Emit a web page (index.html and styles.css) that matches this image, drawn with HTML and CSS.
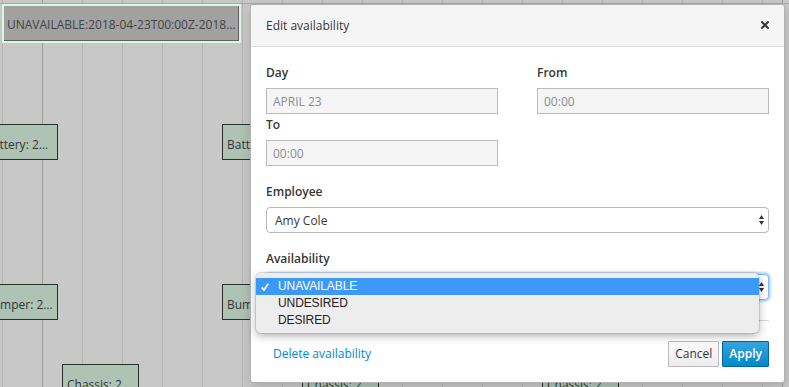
FILE: index.html
```html
<!DOCTYPE html>
<html lang="en">
<head>
  <meta charset="UTF-8" />
  <meta name="viewport" content="width=device-width, initial-scale=1.0"/>
  <title>Edit availability</title>
  <link rel="stylesheet" href="styles.css">
</head>
<body>

  <div class="timeline">
    <div class="timeline-axis"></div>
    <div class="major-line line-a"></div>
    <div class="major-line line-b"></div>

    <div class="item item-selected">UNAVAILABLE:2018-04-23T00:00Z-2018…</div>
    <div class="item battery-1">Battery: 2…</div>
    <div class="item battery-2">Battery: 2…</div>
    <div class="item bumper-1">Bumper: 2…</div>
    <div class="item bumper-2">Bumper: 2…</div>
    <div class="item chassis-1">Chassis: 2…</div>
    <div class="item chassis-2">Chassis: 2…</div>
    <div class="item chassis-3">Chassis: 2…</div>
  </div>

  <div class="modal">
    <div class="modal-header">
      <span class="modal-title">Edit availability</span>
      <svg class="close" width="8" height="8" viewBox="0 0 8 8">
        <path d="M1 1L7 7M7 1L1 7" stroke="#363636" stroke-width="2" stroke-linecap="square"/>
      </svg>
    </div>

    <div class="modal-body">
      <div class="row">
        <div class="form-group">
          <label>Day</label>
          <input class="form-control readonly" value="APRIL 23" readonly>
        </div>
        <div class="form-group">
          <label>From</label>
          <input class="form-control readonly" value="00:00" readonly>
        </div>
      </div>

      <div class="row group-to">
        <div class="form-group">
          <label>To</label>
          <input class="form-control readonly" value="00:00" readonly>
        </div>
      </div>

      <div class="form-group group-gap">
        <label>Employee</label>
        <div class="select-wrap">
          <select class="form-control select">
            <option>Amy Cole</option>
          </select>
          <svg class="select-arrows" width="5" height="10" viewBox="0 0 5 10">
            <path d="M0 4L2.5 0L5 4Z M0 6L5 6L2.5 10Z" fill="#333"/>
          </svg>
        </div>
      </div>

      <div class="form-group group-gap">
        <label>Availability</label>
        <div class="select-wrap">
          <select class="form-control select select-focus">
            <option>UNAVAILABLE</option>
          </select>
          <svg class="select-arrows" width="5" height="10" viewBox="0 0 5 10">
            <path d="M0 4L2.5 0L5 4Z M0 6L5 6L2.5 10Z" fill="#333"/>
          </svg>

          <div class="select-menu">
            <div class="option option-active">
              <svg class="check" width="8" height="8" viewBox="0 0 8 8">
                <path d="M0.8 4.4L3 7L7.3 0.7" fill="none" stroke="#fff" stroke-width="1.8"/>
              </svg>
              UNAVAILABLE
            </div>
            <div class="option">UNDESIRED</div>
            <div class="option">DESIRED</div>
          </div>
        </div>
      </div>
    </div>

    <div class="modal-footer">
      <button class="btn btn-link">Delete availability</button>
      <div class="footer-actions">
        <button class="btn btn-default">Cancel</button>
        <button class="btn btn-primary">Apply</button>
      </div>
    </div>
  </div>

</body>
</html>
```

FILE: styles.css
```css
* {
  box-sizing: border-box;
}

body {
  margin: 0;
  width: 789px;
  height: 387px;
  overflow: hidden;
  position: relative;
  font-family: 'Open Sans', sans-serif;
  font-size: 12px;
  color: #363636;
}

/* timeline behind the dialog */
.timeline {
  position: relative;
  height: 387px;
  overflow: hidden;
  background-color: #c8c8c8;
  background-image: linear-gradient(to right, #b4b4b4 1px, transparent 1px);
  background-size: 40px 100%;
  background-position: 2px 0;
}

.timeline-axis {
  height: 4px;
  border-bottom: 1px solid #a8a8a8;
}

.major-line {
  position: absolute;
  top: 0;
  bottom: 0;
  width: 1px;
  background: #9d9d9d;
}

.line-a { left: 42px; }
.line-b { left: 782px; }

.item {
  position: absolute;
  height: 36px;
  padding: 11px 4px 0;
  border: 1px solid #2e2e2e;
  background: #afc3b5;
  color: #333;
  line-height: 17px;
  white-space: nowrap;
  overflow: hidden;
}

.item-selected {
  left: 2px;
  top: 4px;
  width: 239px;
  height: 39px;
  padding: 10px 3px 0;
  border: 2px solid #def5e5;
  background: #a1a1a1;
  box-shadow: inset -1px -1px 0 #606060;
  color: #444;
}

.battery-1 { left: -20px; top: 124px; width: 78px; }
.battery-2 { left: 222px; top: 124px; width: 78px; }
.bumper-1  { left: -20px; top: 284px; width: 78px; }
.bumper-2  { left: 222px; top: 284px; width: 78px; }
.chassis-1 { left: 62px;  top: 364px; width: 77px; }
.chassis-2 { left: 302px; top: 364px; width: 77px; }
.chassis-3 { left: 542px; top: 364px; width: 77px; }

/* dialog */
.modal {
  position: absolute;
  left: 250px;
  top: 4px;
  width: 535px;
  background: #fff;
  border: 1px solid rgba(0,0,0,0.3);
  border-radius: 3px;
  box-shadow: 0 4px 12px rgba(0,0,0,0.15);
}

.modal-header {
  display: flex;
  justify-content: space-between;
  align-items: center;
  padding: 12px 15px;
  line-height: 17px;
  background: #f5f5f5;
  border-bottom: 1px solid #dcdcdc;
  border-radius: 3px 3px 0 0;
}

.close {
  display: block;
  margin-bottom: 1px;
}

.modal-body {
  padding: 17px 15px 20px;
}

.row {
  display: grid;
  grid-template-columns: 232px 232px;
  column-gap: 39px;
}

.group-to {
  margin-top: 2px;
}

.group-gap {
  margin-top: 17px;
}

.form-group label {
  display: block;
  font-weight: 600;
  line-height: 17px;
  margin-bottom: 7px;
}

.form-control {
  display: block;
  width: 100%;
  height: 26px;
  padding: 0 6px;
  border: 1px solid #bbb;
  border-radius: 0;
  background: #fff;
  font: inherit;
  color: #363636;
  outline: none;
}

.readonly {
  background: #f5f5f5;
  color: #8b8d8f;
}

.select-wrap {
  position: relative;
}

.select {
  appearance: none;
  -webkit-appearance: none;
  padding-left: 8px;
  border-color: #b9b9b9;
  border-radius: 4px;
}

.select-focus {
  border-color: #80b9ec;
  box-shadow: 0 0 2px 2px rgba(100,170,240,0.45);
}

.select-arrows {
  position: absolute;
  right: 5px;
  top: 8px;
}

.select-menu {
  position: absolute;
  left: -10px;
  top: -1px;
  width: 503px;
  padding: 5px 0 4px;
  background: #ededed;
  border-radius: 5px;
  box-shadow: 0 0 0 1px rgba(0,0,0,0.1), 0 3px 8px rgba(0,0,0,0.3);
  font-family: 'Liberation Sans', Arial, sans-serif;
  font-size: 12px;
  letter-spacing: -0.1px;
  color: #222;
}

.option {
  position: relative;
  height: 17px;
  line-height: 17px;
  padding-left: 22px;
}

.option-active {
  background: #3d99f6;
  color: #fff;
}

.check {
  position: absolute;
  left: 5px;
  top: 5px;
}

.modal-footer {
  display: flex;
  align-items: center;
  margin: 0 15px;
  padding: 20px 0 15px;
  border-top: 1px solid #d6d6d6;
}

.btn {
  height: 26px;
  padding: 0 6px;
  border: 1px solid transparent;
  border-radius: 1px;
  font: inherit;
  line-height: 24px;
  cursor: pointer;
}

.btn-link {
  background: none;
  color: #0088ce;
}

.footer-actions {
  display: flex;
  gap: 3px;
  margin-left: auto;
}

.btn-default {
  background: linear-gradient(#fafafa, #ededed);
  border-color: #bbb;
  color: #363636;
}

.btn-primary {
  background: linear-gradient(#39a5dc, #0088ce);
  border-color: #00659c;
  color: #fff;
  font-weight: 600;
}
```
